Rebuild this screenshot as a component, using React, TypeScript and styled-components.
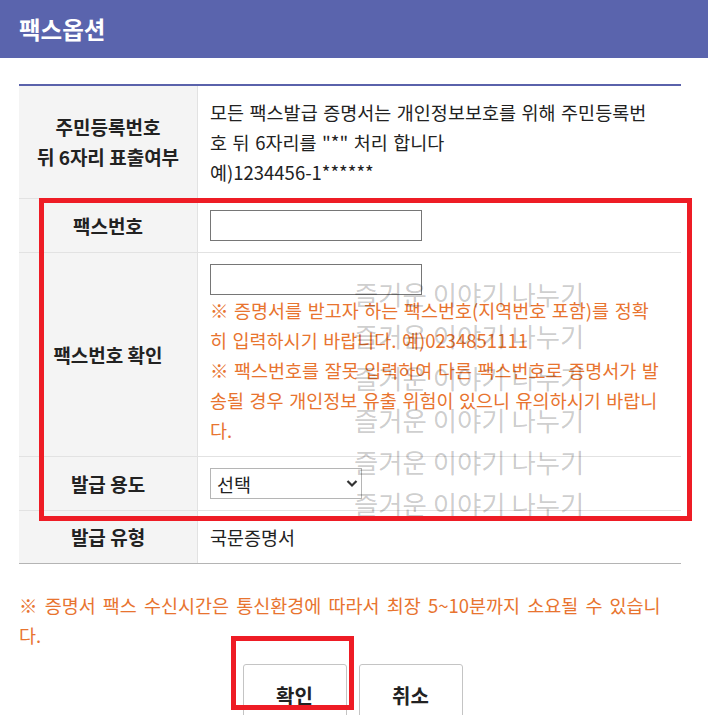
import React, {useState} from "react";
import styled, {createGlobalStyle} from "styled-components";

const GlobalStyle = createGlobalStyle`
  body {
    margin: 0;
    background: #ffffff;
    font-family: "Noto Sans CJK KR", "Noto Sans", sans-serif;
  }
`

const Page = styled.div`
  position: relative;
  width: 708px;
  height: 715px;
  overflow: hidden;
  color: #222222;
`

const Header = styled.header`
  height: 58px;
  background: #5a64ad;
  display: flex;
  align-items: center;
  padding-left: 19px;
`

const Title = styled.h1`
  margin: 0;
  font-size: 23.5px;
  font-weight: 700;
  color: #ffffff;
`

const Content = styled.div`
  padding: 26px 27px 0 19px;
`

const Table = styled.div`
  border-top: 2px solid #5a62ab;
  border-bottom: 1px solid #b4b4b4;
`

const Row = styled.div`
  display: grid;
  grid-template-columns: 179px 1fr;
  border-bottom: 1px solid #e2e2e2;
  &:last-child {
    border-bottom: none;
  }
`

const Label = styled.div`
  background: #f4f4f4;
  border-right: 1px solid #e2e2e2;
  display: flex;
  align-items: center;
  justify-content: center;
  text-align: center;
  font-size: 19px;
  font-weight: 700;
  line-height: 30px;
  color: #222222;
`

const Cell = styled.div`
  padding: 11px 18.5px 11px 12px;
  font-size: 18.5px;
  line-height: 30px;
  word-spacing: 1.4px;
  color: #222222;
`

const Warn = styled.p`
  margin: 0;
  color: #e8742f;
  font-size: 18.5px;
  line-height: 30px;
  word-spacing: 1.4px;
`

const TextInput = styled.input`
  display: block;
  box-sizing: border-box;
  width: 212px;
  height: 31px;
  margin: 0;
  border: 1px solid #767676;
  border-radius: 0;
  padding: 0 6px;
  font-size: 16px;
  font-family: inherit;
`

const SelectBox = styled.div`
  position: relative;
  width: 152px;
  height: 31px;
`

const Select = styled.select`
  appearance: none;
  box-sizing: border-box;
  width: 100%;
  height: 100%;
  margin: 0;
  border: 1px solid #b5b5b5;
  border-radius: 0;
  background: #ffffff;
  padding: 0 24px 0 6px;
  font-size: 18.5px;
  font-family: inherit;
  color: #222222;
`

const Chevron = styled.svg`
  position: absolute;
  right: 4px;
  top: 11px;
  pointer-events: none;
`

const Note = styled(Warn)`
  margin-top: 26px;
  word-spacing: 3px;
`

const ButtonRow = styled.div`
  display: flex;
  justify-content: center;
  gap: 12px;
  margin-top: 14px;
  padding-left: 5px;
`

const Button = styled.button`
  width: 104px;
  height: 62px;
  border: 1px solid #c4c4c4;
  border-radius: 3px;
  background: #ffffff;
  font-family: inherit;
  font-size: 20px;
  font-weight: 700;
  color: #222222;
  cursor: pointer;
`

const Watermark = styled.div`
  position: absolute;
  left: 354px;
  top: 273px;
  pointer-events: none;
`

const WatermarkLine = styled.div`
  font-size: 26.4px;
  line-height: 42px;
  color: rgba(0, 0, 0, 0.21);
  white-space: nowrap;
`

const Marker = styled.div<{$left: number; $top: number; $width: number; $height: number}>`
  position: absolute;
  box-sizing: border-box;
  left: ${p => p.$left}px;
  top: ${p => p.$top}px;
  width: ${p => p.$width}px;
  height: ${p => p.$height}px;
  border: 5px solid #ee1c25;
  pointer-events: none;
`

const purposes = ['선택', '제출용', '확인용']

export default function App() {
    const [fax, setFax] = useState('')
    const [faxConfirm, setFaxConfirm] = useState('')
    const [purpose, setPurpose] = useState(purposes[0])

    return (
        <Page>
            <GlobalStyle/>
            <Header>
                <Title>팩스옵션</Title>
            </Header>
            <Content>
                <Table>
                    <Row>
                        <Label>주민등록번호<br/>뒤 6자리 표출여부</Label>
                        <Cell>
                            모든 팩스발급 증명서는 개인정보보호를 위해 주민등록번호 뒤 6자리를 "*" 처리 합니다<br/>
                            예)1234456-1******
                        </Cell>
                    </Row>
                    <Row>
                        <Label>팩스번호</Label>
                        <Cell>
                            <TextInput value={fax} onChange={e => setFax(e.target.value)}/>
                        </Cell>
                    </Row>
                    <Row>
                        <Label>팩스번호 확인</Label>
                        <Cell>
                            <TextInput value={faxConfirm} onChange={e => setFaxConfirm(e.target.value)}/>
                            <Warn>※ 증명서를 받고자 하는 팩스번호(지역번호 포함)를 정확히 입력하시기 바랍니다. 예)0234851111</Warn>
                            <Warn>※ 팩스번호를 잘못 입력하여 다른 팩스번호로 증명서가 발송될 경우 개인정보 유출 위험이 있으니 유의하시기 바랍니다.</Warn>
                        </Cell>
                    </Row>
                    <Row>
                        <Label>발급 용도</Label>
                        <Cell>
                            <SelectBox>
                                <Select value={purpose} onChange={e => setPurpose(e.target.value)}>
                                    {purposes.map(item => <option key={item} value={item}>{item}</option>)}
                                </Select>
                                <Chevron width="12" height="9" viewBox="0 0 12 9">
                                    <path d="M1.5 2 L6 6.5 L10.5 2" fill="none" stroke="#333" strokeWidth="2.2"/>
                                </Chevron>
                            </SelectBox>
                        </Cell>
                    </Row>
                    <Row>
                        <Label>발급 유형</Label>
                        <Cell>국문증명서</Cell>
                    </Row>
                </Table>
                <Note>※ 증명서 팩스 수신시간은 통신환경에 따라서 최장 5~10분까지 소요될 수 있습니다.</Note>
                <ButtonRow>
                    <Button>확인</Button>
                    <Button>취소</Button>
                </ButtonRow>
            </Content>
            <Watermark>
                {Array.from({length: 6}).map((_, i) => (
                    <WatermarkLine key={i}>즐거운 이야기 나누기</WatermarkLine>
                ))}
            </Watermark>
            <Marker $left={39} $top={198} $width={653} $height={323}/>
            <Marker $left={231} $top={636} $width={123} $height={74}/>
        </Page>
    )
}
